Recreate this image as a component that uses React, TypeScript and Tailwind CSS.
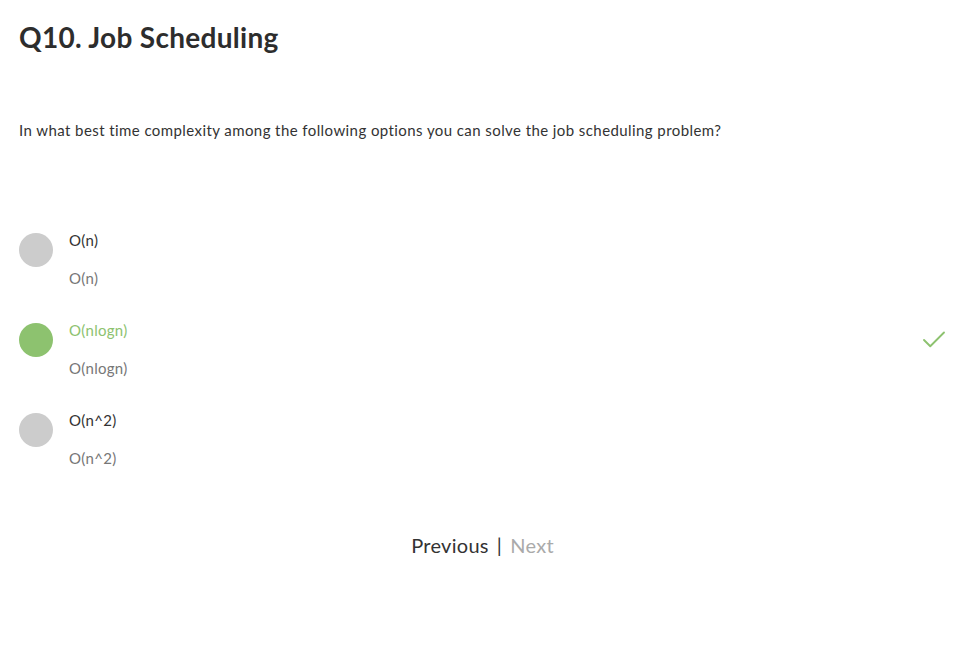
import { Check } from 'lucide-react';

const options = [
  { label: 'O(n)', correct: false },
  { label: 'O(nlogn)', correct: true },
  { label: 'O(n^2)', correct: false },
];

export default function App() {
  return (
    <div className="w-[979px] h-[646px] bg-white text-[#333] font-['Lato',sans-serif] overflow-hidden">
      <div className="px-[19px] pt-[19px]">
        <h1 className="text-[28px] leading-[36px] font-bold text-[#2d2d2d] tracking-[0.3px]">Q10. Job Scheduling</h1>
        <p className="mt-[64px] text-[15px] leading-[22px] text-[#333] tracking-[0.42px]">
          In what best time complexity among the following options you can solve the job scheduling problem?
        </p>

        <div className="mt-[88px] flex flex-col gap-[30px]">
          {options.map((o) => (
            <div key={o.label} className="flex items-start">
              <div className={`mt-[4px] w-[34px] h-[34px] rounded-full shrink-0 ${o.correct ? 'bg-[#8dc26f]' : 'bg-[#cccccc]'}`} />
              <div className="ml-[16px] flex-1 flex flex-col gap-[16px] tracking-[0.3px]">
                <span className={`text-[15px] leading-[22px] ${o.correct ? 'text-[#8dc26f]' : 'text-[#333]'}`}>{o.label}</span>
                <span className="text-[15px] leading-[22px] text-[#777]">{o.label}</span>
              </div>
              {o.correct && <Check className="mt-[6px] mr-[11px] text-[#8dc26f]" size={30} strokeWidth={1.5} />}
            </div>
          ))}
        </div>

        <div className="mt-[62px] flex justify-center items-center gap-[8px] text-[20px] leading-[28px] pr-[14px] tracking-[0.3px]">
          <span className="text-[#333]">Previous</span>
          <span className="text-[#333]">|</span>
          <span className="text-[#aaa]">Next</span>
        </div>
      </div>
    </div>
  );
}
